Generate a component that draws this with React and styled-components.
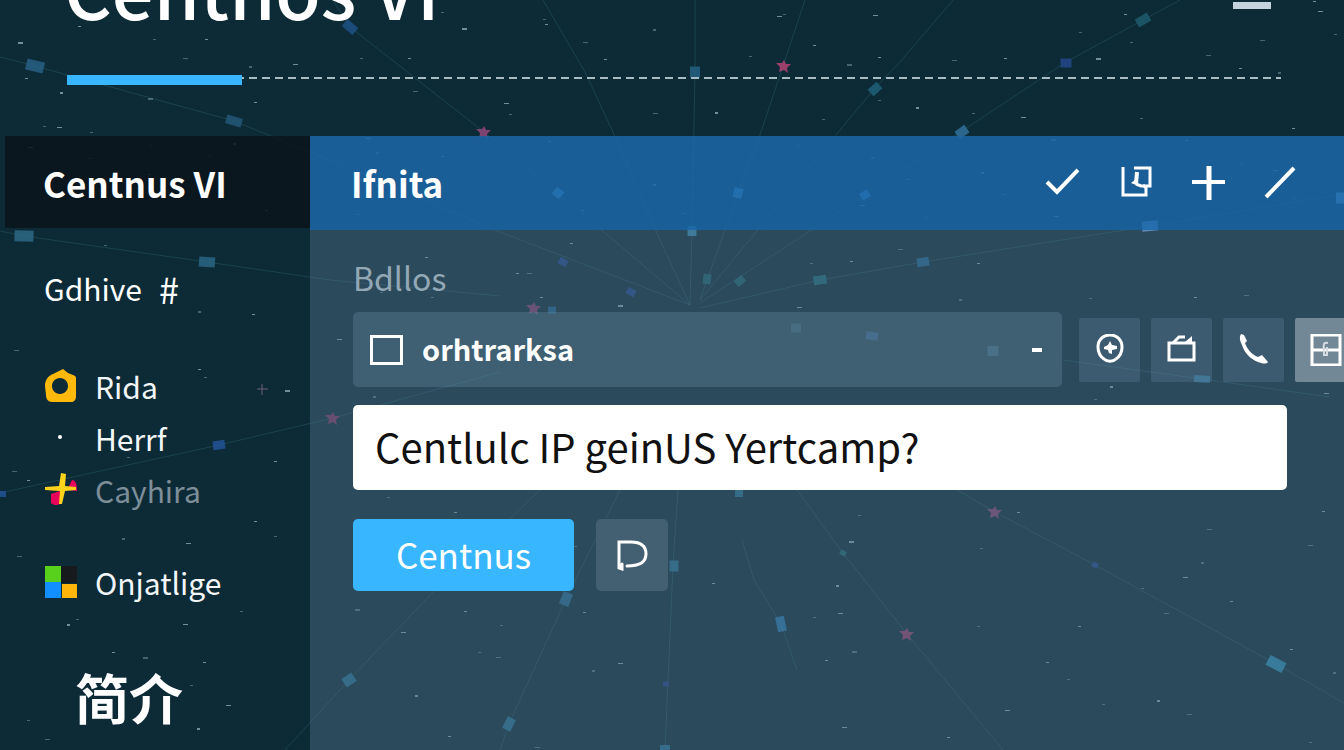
import React, { useState } from 'react';
import styled, { createGlobalStyle } from 'styled-components';

const rays = [
  '0,57 35,66 234,121 310,152 500,232 690,305',
  '0,231 24,236 207,262 330,280 500,296',
  '0,493 219,445 333,418 500,372',
  '285,750 349,680 435,590 540,490',
  '500,750 509,724 566,599 620,490',
  '665,750 673,565 678,490',
  '742,540 754,580 781,624 797,670',
  '797,490 843,553 907,634 1003,750',
  '940,480 995,512 1095,565 1276,664 1344,703',
  '543,0 585,72 612,130 660,240 690,305',
  '695,0 695,72 692,230 690,305',
  '805,0 783,66 760,135 738,193 700,300',
  '953,0 900,62 875,88 840,130 700,300',
  '1180,0 1143,20 1066,62 962,131 865,195 700,303',
  '1344,194 1150,226 923,262 820,280 700,308',
  '320,-20 350,27 484,132 558,193 690,305',
  '1063,360 1202,379 1330,397',
];

// x, y, width, height, rotation, colour
const nodes = [
  [35, 66, 18, 11, 14, '#296084'],
  [234, 121, 16, 9, 16, '#235878'],
  [24, 236, 19, 11, 2, '#2d6884'],
  [207, 262, 16, 10, 4, '#2a6685'],
  [219, 445, 12, 9, -8, '#235496'],
  [2, 494, 8, 6, 0, '#235496'],
  [350, 27, 14, 9, 40, '#1f5285'],
  [695, 72, 10, 11, 0, '#246280'],
  [692, 231, 9, 10, 0, '#3184a6'],
  [875, 89, 12, 9, -42, '#1f6078'],
  [1143, 20, 14, 9, -30, '#1f5c6c'],
  [1066, 63, 11, 9, 0, '#24478a'],
  [962, 132, 12, 9, -35, '#31709a'],
  [558, 193, 9, 9, 40, '#58b0e8'],
  [738, 193, 9, 10, 14, '#58b0e8'],
  [865, 195, 9, 8, -30, '#4b9ad8'],
  [1150, 226, 16, 10, -5, '#68a0d8'],
  [1342, 198, 12, 11, 0, '#78b8f0'],
  [923, 262, 12, 9, -8, '#1f5f86'],
  [820, 280, 13, 9, -8, '#1b6470'],
  [740, 281, 10, 8, -40, '#195c64'],
  [707, 279, 8, 10, 8, '#195c64'],
  [563, 262, 9, 7, 30, '#1f4284'],
  [631, 292, 9, 7, 30, '#1f4284'],
  [552, 310, 8, 7, 0, '#1f5c80'],
  [796, 328, 10, 9, 0, '#254c60'],
  [872, 336, 12, 8, 8, '#244c78'],
  [993, 351, 11, 10, 0, '#2c566c'],
  [1202, 379, 16, 7, 4, '#216a90'],
  [349, 680, 12, 10, -35, '#226a84'],
  [566, 599, 10, 13, 22, '#226484'],
  [509, 724, 9, 13, 26, '#226a84'],
  [674, 566, 9, 11, 0, '#226a84'],
  [665, 749, 10, 8, 0, '#226a84'],
  [781, 624, 9, 15, -12, '#2270a0'],
  [843, 553, 6, 5, 30, '#1b6068'],
  [1276, 664, 18, 11, 28, '#2684a6'],
  [1095, 565, 6, 5, 30, '#1f4284'],
  [666, 684, 6, 5, 0, '#1f3a7c'],
  [739, 493, 8, 8, 0, '#226a84'],
];

const flares = [
  [784, 66, '#9b3f6b'],
  [484, 132, '#7c4270'],
  [333, 418, '#6a3458'],
  [534, 308, '#6a3a5e'],
  [995, 512, '#6d4062'],
  [907, 634, '#7a3c5e'],
];

const stars = [
  [20, 42], [155, 39], [207, 39], [185, 58], [27, 78], [251, 66], [295, 64], [362, 58], [410, 58], [415, 91],
  [62, 92], [45, 126], [59, 127], [92, 132], [256, 102], [150, 98], [80, 26], [443, 12], [30, 147], [152, 145],
  [235, 143], [89, 158], [150, 174], [211, 156], [368, 138], [378, 152], [443, 156], [358, 214], [267, 210], [106, 245],
  [464, 28], [545, 19], [547, 24], [585, 42], [606, 59], [655, 29], [506, 103], [511, 114], [550, 141], [655, 113],
  [717, 112], [751, 56], [779, 16], [785, 14], [815, 45], [849, 64], [880, 57], [824, 119], [875, 15], [880, 100],
  [655, 184], [683, 213], [583, 210], [799, 145], [862, 205], [873, 157], [572, 243], [954, 60], [1006, 58], [1081, 32],
  [1098, 58], [1132, 42], [1126, 14], [1262, 40], [1241, 68], [1280, 72], [1320, 11], [1336, 34], [1315, 1], [1208, 55],
  [918, 107], [974, 113], [1023, 117], [1142, 118], [1294, 128], [1053, 139], [1187, 140], [1243, 164], [1275, 170], [1294, 198],
  [983, 172], [1004, 194], [908, 179], [927, 217], [1056, 216], [200, 311], [254, 314], [16, 350], [200, 369], [206, 377],
  [287, 390], [129, 457], [276, 461], [14, 471], [29, 480], [124, 538], [188, 543], [276, 536], [256, 521], [19, 556],
  [69, 624], [78, 619], [185, 624], [242, 611], [114, 652], [145, 657], [205, 662], [192, 685], [228, 705], [29, 720],
  [199, 728], [47, 739], [427, 257], [382, 292], [339, 339], [375, 396], [518, 273], [529, 273], [542, 297], [433, 297],
  [620, 305], [812, 263], [852, 261], [900, 249], [979, 263], [961, 299], [799, 307], [1091, 298], [1196, 297],
  [1246, 295], [1112, 386], [1096, 399], [1326, 393], [389, 497], [456, 512], [357, 609], [466, 611], [502, 625], [403, 632],
  [480, 652], [417, 695], [498, 657], [585, 612], [576, 546], [620, 663], [594, 670], [450, 736], [537, 747], [714, 583],
  [860, 515], [851, 541], [982, 548], [1019, 512], [1209, 529], [1324, 511], [1203, 562], [1185, 577], [1143, 588], [1232, 601],
  [1166, 613], [838, 585], [815, 617], [840, 613], [979, 626], [1080, 626], [854, 651], [1048, 662], [1069, 679], [1007, 710],
  [1104, 704], [1159, 700], [1189, 714], [949, 737], [1311, 742], [844, 727], [1335, 672], [1292, 649], [1310, 545], [827, 660],
];

function Sky() {
  return (
    <SkySvg viewBox="0 0 1344 750" preserveAspectRatio="xMidYMid slice" aria-hidden="true">
      {rays.map((points) => (
        <polyline key={points} points={points} fill="none" stroke="#3f8a90" strokeOpacity="0.26" />
      ))}
      {nodes.map(([x, y, w, h, angle, fill]) => (
        <rect
          key={`${x}-${y}`}
          x={x - w / 2}
          y={y - h / 2}
          width={w}
          height={h}
          fill={fill}
          fillOpacity="0.85"
          transform={`rotate(${angle} ${x} ${y})`}
        />
      ))}
      {flares.map(([x, y, fill]) => (
        <path
          key={`${x}-${y}`}
          d={`M${x} ${y - 6}l2 4 5 0-4 4 1 5-4-3-5 2 1-5-4-4 6 0z`}
          fill={fill}
        />
      ))}
      <path d="M257 389h11M262 384v11" stroke="#6b6175" strokeWidth="1" />
      {stars.map(([x, y], i) => (
        <rect
          key={`${x}-${y}`}
          x={x - 2}
          y={y}
          width={i % 3 === 0 ? 5 : 3}
          height={i % 5 === 0 ? 2 : 1}
          fill="#b8d0d4"
          fillOpacity={i % 2 === 0 ? 0.6 : 0.35}
        />
      ))}
    </SkySvg>
  );
}

const CheckIcon = () => (
  <svg width="34" height="34" viewBox="0 0 34 34" fill="none" stroke="currentColor" strokeWidth="4">
    <path d="M2 16l10 10L33 4" />
  </svg>
);

const CopyIcon = () => (
  <svg width="34" height="34" viewBox="0 0 34 34" fill="none" stroke="currentColor" strokeWidth="3">
    <path d="M5 1v28h23v-7l-3-3" />
    <path d="M16 2h16v18h-9l-5-2" />
    <path d="M19 6l-1 12" strokeWidth="4" />
    <path d="M13 17l5-4v6z" fill="currentColor" stroke="none" />
  </svg>
);

const PlusIcon = () => (
  <svg width="34" height="34" viewBox="0 0 34 34" fill="none" stroke="currentColor" strokeWidth="5">
    <path d="M18 0v34" />
    <path d="M1 16h34" strokeWidth="4" />
  </svg>
);

const SlashIcon = () => (
  <svg width="34" height="34" viewBox="0 0 34 34" fill="none" stroke="currentColor" strokeWidth="4">
    <path d="M2 31L30 2" />
  </svg>
);

const TargetIcon = () => (
  <svg width="32" height="32" viewBox="0 0 32 32" fill="none" stroke="currentColor" strokeWidth="3">
    <path d="M16 1c7 0 12 5 12 12 0 6-3 10-6 12-3 3-9 3-12 0-3-2-6-6-6-12C4 6 9 1 16 1z" />
    <path d="M16 7l2 4 5 1v3l-5 1v4l-3-1-1-3-4-1v-2l4-2z" fill="currentColor" stroke="none" />
  </svg>
);

const ClapIcon = () => (
  <svg width="32" height="32" viewBox="0 0 32 32" fill="none" stroke="currentColor" strokeWidth="3">
    <path d="M3 9h25v17H3z" />
    <path d="M7 9l6-6h6" />
    <path d="M19 8l7-6v6z" fill="currentColor" stroke="none" />
  </svg>
);

const PhoneIcon = () => (
  <svg width="32" height="32" viewBox="0 0 32 32" fill="currentColor">
    <path d="M3 0l3 1 3 6-2 2c2 6 7 12 13 14l4-2 6 7c-2 3-7 1-10 0C12 25 6 18 4 11 2 7 1 3 3 0z" />
  </svg>
);

const GridIcon = () => (
  <svg width="32" height="32" viewBox="0 0 32 32" fill="none" stroke="currentColor" strokeWidth="3">
    <path d="M2 1h28v30H2z" />
    <path d="M3 16h26" strokeWidth="3" />
    <path d="M18 9c-4-1-5 1-4 6v6h3v-8" stroke="#d5dde2" strokeWidth="2" />
  </svg>
);

const FlagIcon = () => (
  <svg width="32" height="32" viewBox="0 0 32 32" fill="none" stroke="currentColor" strokeWidth="3" strokeLinecap="round">
    <path d="M11 27c10 0 19-2 19-12C30 6 24 3 15 3H3v26l3 1v-5" />
  </svg>
);

const RingIcon = () => (
  <svg width="32" height="34" viewBox="0 0 32 34" fillRule="evenodd">
    <path
      d="M19 0l5 4 5 2c3 1 3 2 3 4v17c0 4-2 6-5 6H8c-4 0-6-3-6-7l-1-9c0-6 3-10 8-12zM16 9c-5 0-8 4-8 8s3 8 8 8 8-4 8-8-3-8-8-8z"
      fill="#ffb90a"
    />
  </svg>
);

const DotIcon = () => (
  <svg width="32" height="34" viewBox="0 0 32 34">
    <circle cx="16" cy="16" r="2" fill="#fff" />
  </svg>
);

const SparkIcon = () => (
  <svg width="34" height="34" viewBox="0 0 34 34">
    <path d="M7 21l9-3v13c-3 2-7 1-9-1zM25 13l3-6c4 0 5 5 5 11l-8-1z" fill="#e8065c" />
    <path d="M17 0l5 1-1 12 11 1v3l-11 1-3 13h-3l1-13-15-1v-3l14-1z" fill="#ffd21c" />
  </svg>
);

const TilesIcon = () => (
  <svg width="33" height="32" viewBox="0 0 33 32" shapeRendering="crispEdges">
    <path d="M1 0h16v16H1z" fill="#57d11c" />
    <path d="M17 0h16v17H17z" fill="#171a1c" />
    <path d="M1 16h16v16H1z" fill="#128fff" />
    <path d="M18 18h15v14H18z" fill="#ffb50a" />
  </svg>
);

const tools = [
  { name: 'Confirm', Icon: CheckIcon },
  { name: 'Copy', Icon: CopyIcon },
  { name: 'Add', Icon: PlusIcon },
  { name: 'Edit', Icon: SlashIcon },
];

const actions = [
  { name: 'Locate', Icon: TargetIcon },
  { name: 'Media', Icon: ClapIcon },
  { name: 'Call', Icon: PhoneIcon },
  { name: 'Grid', Icon: GridIcon, active: true },
];

const links = [
  { label: 'Rida', Icon: RingIcon },
  { label: 'Herrf', Icon: DotIcon },
  { label: 'Cayhira', Icon: SparkIcon, muted: true },
];

export default function App() {
  const [checked, setChecked] = useState(false);
  const [query, setQuery] = useState('Centlulc IP geinUS Yertcamp?');

  return (
    <>
      <GlobalStyle />
      <Page>
        <Sky />
        <Header>
          <Title>Centnos VI</Title>
          <Minimize aria-label="Minimize" />
        </Header>
        <Rule />
        <Body>
          <Sidebar>
            <Brand>Centnus VI</Brand>
            <Nav>
              <Channel href="#gdhive">Gdhive <Hash>#</Hash></Channel>
              <LinkList>
                {links.map(({ label, Icon, muted }) => (
                  <li key={label}>
                    <NavLink href={`#${label}`} $muted={muted}>
                      <NavIcon><Icon /></NavIcon>
                      {label}
                    </NavLink>
                  </li>
                ))}
              </LinkList>
              <NavLink href="#onjatlige">
                <NavIcon><TilesIcon /></NavIcon>
                Onjatlige
              </NavLink>
              <Intro lang="zh">简介</Intro>
            </Nav>
          </Sidebar>
          <Main>
            <Toolbar>
              <ToolbarTitle>Ifnita</ToolbarTitle>
              <Tools>
                {tools.map(({ name, Icon }) => (
                  <ToolButton key={name} aria-label={name}><Icon /></ToolButton>
                ))}
              </Tools>
            </Toolbar>
            <Content>
              <FieldLabel htmlFor="source">Bdllos</FieldLabel>
              <FieldRow>
                <SelectBox>
                  <CheckBox
                    type="checkbox"
                    aria-label="Enable"
                    checked={checked}
                    onChange={(e) => setChecked(e.target.checked)}
                  />
                  <Select id="source">
                    <option>orhtrarksa</option>
                  </Select>
                  <Dash />
                </SelectBox>
                {actions.map(({ name, Icon, active }) => (
                  <ActionButton key={name} aria-label={name} $active={active}><Icon /></ActionButton>
                ))}
              </FieldRow>
              <QueryInput aria-label="Query" value={query} onChange={(e) => setQuery(e.target.value)} />
              <ButtonRow>
                <PrimaryButton>Centnus</PrimaryButton>
                <FlagButton aria-label="Flag"><FlagIcon /></FlagButton>
              </ButtonRow>
            </Content>
          </Main>
        </Body>
      </Page>
    </>
  );
}

const GlobalStyle = createGlobalStyle`
  * {
    box-sizing: border-box;
  }
  body {
    margin: 0;
    background: #0d2b37;
    color: #fff;
    font-family: "Noto Sans CJK SC", "Noto Sans", sans-serif;
  }
  button, input, select {
    font-family: inherit;
    color: inherit;
    border: 0;
    margin: 0;
    padding: 0;
  }
  a {
    color: inherit;
    text-decoration: none;
  }
`;

const Page = styled.div`
  position: relative;
  display: flex;
  flex-direction: column;
  height: 100vh;
  overflow: hidden;
  isolation: isolate;
`;

const SkySvg = styled.svg`
  position: absolute;
  inset: 0;
  z-index: -1;
  width: 100%;
  height: 100%;
`;

const Header = styled.header`
  display: flex;
  flex: none;
  justify-content: space-between;
  align-items: flex-end;
  height: 40px;
  padding: 0 73px 0 64px;
`;

const Title = styled.h1`
  margin: 0 0 10px;
  font-size: 74px;
  font-weight: 500;
  line-height: 84px;
`;

const Minimize = styled.button`
  align-self: flex-start;
  width: 38px;
  height: 9px;
  background: linear-gradient(#c5d3de, #c5d3de) bottom / 100% 7px no-repeat;
`;

const Rule = styled.div`
  flex: none;
  height: 10px;
  margin: 35px 63px 51px 67px;
  background:
    linear-gradient(#38b6ff, #38b6ff) left / 175px 10px no-repeat,
    repeating-linear-gradient(90deg, #a9bcc2 0 8px, transparent 8px 13px) 0 2px / 100% 2px no-repeat;
`;

const Body = styled.div`
  display: flex;
  flex: 1;
  min-height: 0;
`;

const Sidebar = styled.aside`
  flex: none;
  width: 310px;
  padding-left: 5px;
`;

const Brand = styled.div`
  height: 92px;
  padding-left: 38px;
  background: rgba(10, 20, 27, 0.85);
  font-size: 35px;
  font-weight: 700;
  line-height: 94px;
`;

const Nav = styled.nav`
  padding: 34px 0 0 39px;
`;

const Channel = styled.a`
  display: flex;
  align-items: center;
  gap: 17px;
  margin-bottom: 46px;
  font-size: 30px;
  line-height: 52px;
`;

const Hash = styled.span`
  font-size: 36px;
`;

const LinkList = styled.ul`
  margin: 0 0 40px;
  padding: 0;
  list-style: none;
`;

const NavLink = styled.a`
  display: flex;
  align-items: center;
  font-size: 30px;
  line-height: 52px;
  color: ${({ $muted }) => ($muted ? '#7d8e99' : '#f2f6f8')};
`;

const NavIcon = styled.span`
  display: flex;
  flex: none;
  width: 51px;
`;

const Intro = styled.h2`
  margin: 53px 0 0 31px;
  font-size: 54px;
  font-weight: 700;
  line-height: 72px;
`;

const Main = styled.main`
  display: flex;
  flex: 1;
  flex-direction: column;
  min-width: 0;
`;

const Toolbar = styled.div`
  display: flex;
  flex: none;
  align-items: center;
  justify-content: space-between;
  height: 94px;
  padding: 0 46px 0 41px;
  background: rgba(28, 103, 168, 0.85);
`;

const ToolbarTitle = styled.h2`
  margin: 0;
  font-size: 35px;
  font-weight: 700;
  line-height: 94px;
`;

const Tools = styled.div`
  display: flex;
  gap: 39px;
`;

const ToolButton = styled.button`
  display: flex;
  background: none;
  cursor: pointer;
`;

const Content = styled.div`
  flex: 1;
  padding: 23px 57px 0 43px;
  background: rgba(99, 132, 164, 0.35);
`;

const FieldLabel = styled.label`
  display: block;
  font-size: 32px;
  line-height: 48px;
  color: #93a8b5;
`;

const FieldRow = styled.div`
  display: flex;
  align-items: center;
  gap: 11px;
  margin: 11px -69px 18px 0;
`;

const SelectBox = styled.div`
  display: flex;
  flex: 1;
  align-items: center;
  min-width: 0;
  height: 75px;
  margin-right: 6px;
  padding: 0 20px 0 17px;
  border-radius: 5px;
  background: rgba(105, 150, 165, 0.3);
`;

const CheckBox = styled.input`
  appearance: none;
  flex: none;
  width: 33px;
  height: 30px;
  border: 3px solid #fff;
  background: ${({ checked }) => (checked ? '#38b6ff' : 'transparent')};
`;

const Select = styled.select`
  appearance: none;
  flex: 1;
  min-width: 0;
  height: 60px;
  margin-left: 19px;
  padding-bottom: 4px;
  background: none;
  font-size: 29px;
  font-weight: 700;
  option {
    color: #0d2b37;
  }
`;

const Dash = styled.span`
  width: 10px;
  height: 4px;
  background: #fff;
`;

const ActionButton = styled.button`
  display: flex;
  flex: none;
  align-items: center;
  justify-content: center;
  width: 61px;
  height: 64px;
  border-radius: 2px;
  background: ${({ $active }) => ($active ? '#738896' : 'rgba(110, 145, 170, 0.25)')};
  cursor: pointer;
`;

const QueryInput = styled.input`
  display: block;
  width: 100%;
  height: 85px;
  padding: 0 22px 4px;
  border-radius: 5px;
  background: #fff;
  color: #111;
  font-size: 40px;
`;

const ButtonRow = styled.div`
  display: flex;
  gap: 22px;
  margin-top: 29px;
`;

const PrimaryButton = styled.button`
  width: 221px;
  height: 72px;
  padding-bottom: 4px;
  border-radius: 5px;
  background: #38b6ff;
  font-size: 35px;
  cursor: pointer;
`;

const FlagButton = styled.button`
  display: flex;
  align-items: center;
  justify-content: center;
  width: 72px;
  height: 72px;
  border-radius: 5px;
  background: #436073;
  cursor: pointer;
`;
